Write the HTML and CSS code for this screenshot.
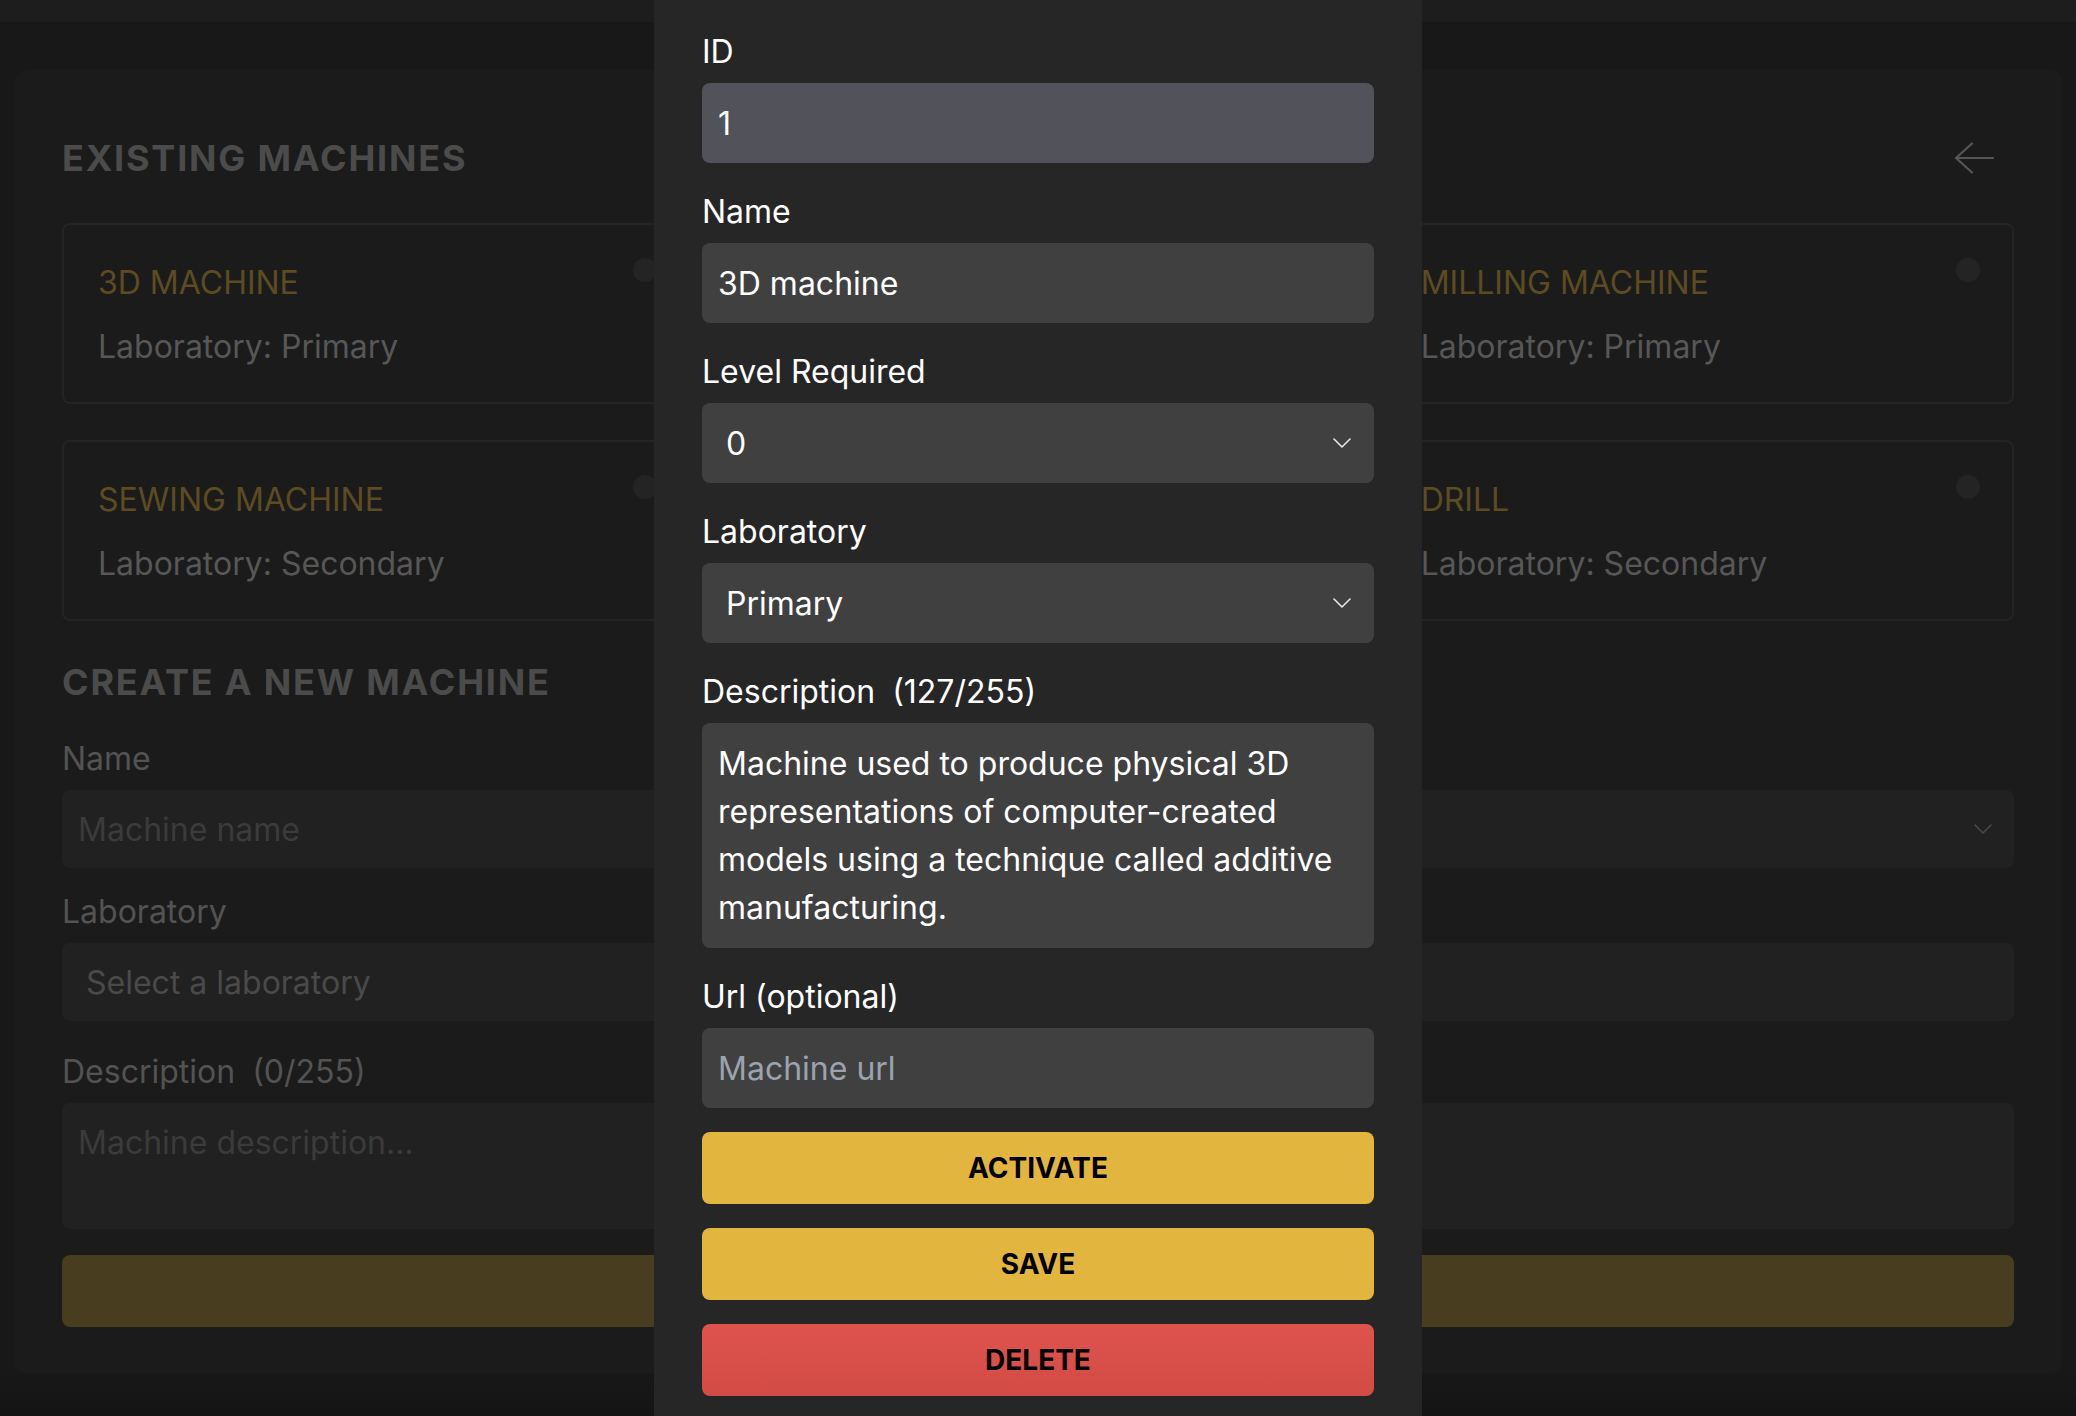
FILE: index.html
```html
<!DOCTYPE html>
<html lang="en">
<head>
<meta charset="utf-8">
<title>Machines</title>
<link rel="stylesheet" href="styles.css">
</head>
<body>
<div class="page">
  <div class="topbar"></div>
  <main class="card">
    <div class="card-head">
      <h2 class="section-title">EXISTING MACHINES</h2>
      <button class="back" type="button" aria-label="Back">
        <svg width="40" height="32" viewBox="0 0 40 32" fill="none" stroke="currentColor" stroke-width="2.2" stroke-linecap="round" stroke-linejoin="round"><path d="M18 1.5 L2 16 L18 30.5 M2 16 H39"/></svg>
      </button>
    </div>
    <div class="machine-grid">
      <div class="machine"><div class="m-title">3D MACHINE</div><div class="m-lab">Laboratory: Primary</div><span class="toggle"></span></div>
      <div class="machine"><span class="toggle"></span></div>
      <div class="machine"><div class="m-title">MILLING MACHINE</div><div class="m-lab">Laboratory: Primary</div><span class="toggle"></span></div>
      <div class="machine"><div class="m-title">SEWING MACHINE</div><div class="m-lab">Laboratory: Secondary</div><span class="toggle"></span></div>
      <div class="machine"><span class="toggle"></span></div>
      <div class="machine"><div class="m-title">DRILL</div><div class="m-lab">Laboratory: Secondary</div><span class="toggle"></span></div>
    </div>

    <h2 class="section-title create-title">CREATE A NEW MACHINE</h2>
    <form class="create-form">
      <div class="c-group">
        <label class="c-label">Name</label>
        <input class="c-field" type="text" placeholder="Machine name">
      </div>
      <div class="c-group">
        <div class="c-label-space"></div>
        <div class="c-field c-select c-select-end">
          <svg class="chev" width="18" height="10" viewBox="0 0 18 10" fill="none" stroke="currentColor" stroke-width="1.6" stroke-linecap="round" stroke-linejoin="round"><path d="M1 1 L9 9 L17 1"/></svg>
        </div>
      </div>
      <div class="c-group row2">
        <label class="c-label">Laboratory</label>
        <div class="c-field c-select"><span>Select a laboratory</span>
          <svg class="chev" width="18" height="10" viewBox="0 0 18 10" fill="none" stroke="currentColor" stroke-width="1.6" stroke-linecap="round" stroke-linejoin="round"><path d="M1 1 L9 9 L17 1"/></svg>
        </div>
      </div>
      <div class="c-group row2">
        <div class="c-label-space"></div>
        <div class="c-field"></div>
      </div>
      <div class="c-group row3 span2">
        <label class="c-label">Description <span class="count">(0/255)</span></label>
        <textarea class="c-field c-area" placeholder="Machine description..."></textarea>
      </div>
      <button class="c-btn span2" type="button" aria-label="Create"></button>
    </form>
  </main>
</div>

<div class="modal">
  <div class="m-group">
    <label class="m-label">ID</label>
    <input class="m-field m-id" type="text" value="1" disabled>
  </div>
  <div class="m-group">
    <label class="m-label">Name</label>
    <input class="m-field" type="text" value="3D machine">
  </div>
  <div class="m-group">
    <label class="m-label">Level Required</label>
    <div class="m-field m-select"><span>0</span>
      <svg class="chev" width="18" height="10" viewBox="0 0 18 10" fill="none" stroke="currentColor" stroke-width="1.6" stroke-linecap="round" stroke-linejoin="round"><path d="M1 1 L9 9 L17 1"/></svg>
    </div>
  </div>
  <div class="m-group">
    <label class="m-label">Laboratory</label>
    <div class="m-field m-select"><span>Primary</span>
      <svg class="chev" width="18" height="10" viewBox="0 0 18 10" fill="none" stroke="currentColor" stroke-width="1.6" stroke-linecap="round" stroke-linejoin="round"><path d="M1 1 L9 9 L17 1"/></svg>
    </div>
  </div>
  <div class="m-group">
    <label class="m-label">Description <span class="count">(127/255)</span></label>
    <textarea class="m-field m-area">Machine used to produce physical 3D representations of computer-created models using a technique called additive manufacturing.</textarea>
  </div>
  <div class="m-group">
    <label class="m-label">Url (optional)</label>
    <input class="m-field" type="text" placeholder="Machine url">
  </div>
  <button class="m-btn btn-yellow" type="button">ACTIVATE</button>
  <button class="m-btn btn-yellow" type="button">SAVE</button>
  <button class="m-btn btn-red" type="button">DELETE</button>
</div>
</body>
</html>
```

FILE: styles.css
```css
* { box-sizing: border-box; }

html, body {
  margin: 0;
  padding: 0;
}

body {
  width: 2076px;
  height: 1416px;
  overflow: hidden;
  position: relative;
  background: #171717;
  font-family: Inter, "Noto Sans", "Liberation Sans", sans-serif;
}

.page {
  height: 1416px;
  background: linear-gradient(#181818 0, #181818 1373px, #141414 1416px);
  display: flex;
  flex-direction: column;
}

.topbar {
  height: 22px;
  background: #1d1d1d;
  flex: none;
}

.card {
  margin: 48px 14px 0;
  height: 1303px;
  background: #1b1b1b;
  border-radius: 12px;
  padding: 61px 48px 47px;
}

.card-head {
  display: flex;
  justify-content: space-between;
  align-items: center;
  height: 54px;
}

.section-title {
  margin: 0;
  font-size: 36px;
  font-weight: 700;
  line-height: 54px;
  letter-spacing: 1.8px;
  color: #4b4b4b;
}

.back {
  background: none;
  border: 0;
  padding: 0;
  margin-right: 20px;
  width: 40px;
  height: 32px;
  display: flex;
  color: #565656;
}

.machine-grid {
  display: grid;
  grid-template-columns: repeat(3, 1fr);
  column-gap: 32px;
  row-gap: 36px;
  margin-top: 38px;
}

.machine {
  position: relative;
  border: 2px solid #242424;
  border-radius: 8px;
  padding: 34px 35px 31px 34px;
  display: flex;
  flex-direction: column;
  align-items: flex-start;
  gap: 16px;
}

.m-title {
  font-size: 32px;
  line-height: 48px;
  color: #5d4b22;
}

.m-lab {
  font-size: 32px;
  line-height: 48px;
  color: #575757;
}

.toggle {
  position: absolute;
  top: 33px;
  right: 32px;
  width: 24px;
  height: 24px;
  border-radius: 50%;
  background: #242424;
}

.create-title {
  margin-top: 34px;
}

.create-form {
  margin: 24px 0 0;
  display: grid;
  grid-template-columns: 1fr 1fr;
  column-gap: 32px;
}

.c-group {
  display: flex;
  flex-direction: column;
}

.row2 { margin-top: 18px; }
.row3 { margin-top: 25px; }
.span2 { grid-column: 1 / span 2; }

.c-label {
  font-size: 32px;
  line-height: 48px;
  padding-top: 2px;
  color: #535353;
  margin-bottom: 7px;
}

.c-label-space {
  height: 50px;
  margin-bottom: 7px;
}

.count { margin-left: 8px; }

.c-field {
  width: 100%;
  height: 78px;
  border: 0;
  border-radius: 8px;
  background: #212121;
  padding: 0 16px;
  font-family: Inter, "Noto Sans", sans-serif;
  font-size: 32px;
  color: #4b4b4b;
  outline: none;
}

.c-field::placeholder { color: #3b3b3b; }

.c-select {
  display: flex;
  align-items: center;
  justify-content: space-between;
  padding: 0 22px 0 24px;
  color: #4a4a4a;
}

.c-select-end { justify-content: flex-end; }

.c-select .chev { color: #4a4a4a; }

.c-area {
  height: 126px;
  padding: 16px 16px 12px;
  line-height: 48px;
  resize: none;
  overflow: hidden;
}

.c-btn {
  margin-top: 26px;
  height: 72px;
  border: 0;
  border-radius: 8px;
  background: #493d20;
}

/* modal */
.modal {
  position: absolute;
  top: 0;
  left: 50%;
  transform: translateX(-50%);
  width: 768px;
  height: 1416px;
  background: #262626;
  padding: 26px 48px;
  overflow: hidden;
}

.m-group {
  display: flex;
  flex-direction: column;
}

.m-group + .m-group { margin-top: 23px; }

.m-label {
  font-size: 32px;
  line-height: 48px;
  padding-top: 2px;
  color: #ffffff;
  margin-bottom: 7px;
}

.m-field {
  width: 100%;
  height: 80px;
  border: 0;
  border-radius: 8px;
  background: #404040;
  padding: 0 16px;
  font-family: Inter, "Noto Sans", sans-serif;
  font-size: 32px;
  color: #ffffff;
  outline: none;
}

.m-field::placeholder { color: #9ca3af; }

.m-id {
  background: #52525b;
  color: #ffffff;
  -webkit-text-fill-color: #ffffff;
  opacity: 1;
}

.m-select {
  display: flex;
  align-items: center;
  justify-content: space-between;
  padding: 0 23px 0 24px;
}

.m-select .chev { color: #e8e8e8; }

.m-area {
  height: 225px;
  padding: 17px 16px 12px;
  line-height: 48px;
  resize: none;
  overflow: hidden;
}

.m-btn {
  display: block;
  width: 100%;
  height: 72px;
  margin-top: 24px;
  border: 0;
  border-radius: 8px;
  font-family: Inter, "Noto Sans", sans-serif;
  font-size: 28px;
  font-weight: 700;
  color: #000000;
}

.btn-yellow { background: #e1b53e; }

.btn-red { background: linear-gradient(#df534d, #d34b46); }
```
